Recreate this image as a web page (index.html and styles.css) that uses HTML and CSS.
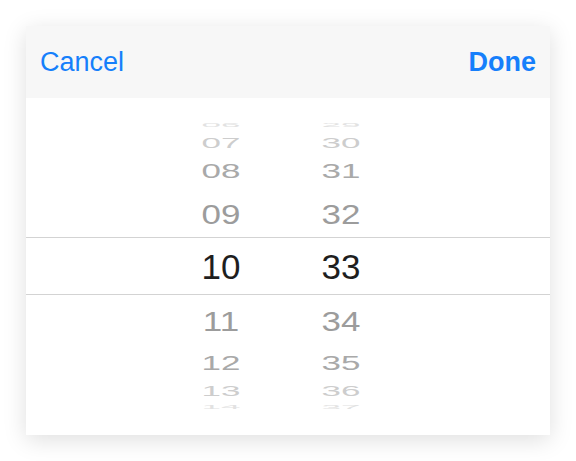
FILE: index.html
```html
<!DOCTYPE html>
<html>
<head>
<meta charset="utf-8">
<link rel="stylesheet" href="styles.css">
</head>
<body>
<div class="sheet">
  <div class="toolbar">
    <span class="btn">Cancel</span>
    <span class="btn done">Done</span>
  </div>
  <div class="picker">
    <div class="band"></div>
    <div class="wheels">
      <div class="wheel">
        <div class="row r4"><span>06</span></div>
        <div class="row r3"><span>07</span></div>
        <div class="row r2"><span>08</span></div>
        <div class="row r1"><span>09</span></div>
        <div class="row r0"><span>10</span></div>
        <div class="row r1"><span>11</span></div>
        <div class="row r2"><span>12</span></div>
        <div class="row r3"><span>13</span></div>
        <div class="row r4"><span>14</span></div>
      </div>
      <div class="wheel">
        <div class="row r4"><span>29</span></div>
        <div class="row r3"><span>30</span></div>
        <div class="row r2"><span>31</span></div>
        <div class="row r1"><span>32</span></div>
        <div class="row r0"><span>33</span></div>
        <div class="row r1"><span>34</span></div>
        <div class="row r2"><span>35</span></div>
        <div class="row r3"><span>36</span></div>
        <div class="row r4"><span>37</span></div>
      </div>
    </div>
  </div>
</div>
</body>
</html>
```
FILE: styles.css
```css
html, body {
  margin: 0;
  padding: 0;
  background: #ffffff;
}
body {
  padding: 26px;
  font-family: "Liberation Sans", Arial, sans-serif;
}
.sheet {
  width: 524px;
  height: 409px;
  background: #ffffff;
  box-shadow: 0 5px 22px rgba(0, 0, 0, 0.13);
  display: flex;
  flex-direction: column;
}
.toolbar {
  height: 72px;
  flex: none;
  background: #f7f7f7;
  display: flex;
  align-items: center;
  justify-content: space-between;
  padding: 0 14px;
}
.btn {
  font-size: 27px;
  color: #167ffb;
  line-height: 1;
}
.done {
  font-weight: bold;
}
.picker {
  flex: 1;
  position: relative;
  overflow: hidden;
}
.band {
  position: absolute;
  left: 0;
  right: 0;
  top: 139px;
  height: 56px;
  border-top: 1px solid #d3d3d3;
  border-bottom: 1px solid #d3d3d3;
}
.wheels {
  height: 100%;
  display: flex;
  justify-content: center;
  padding-right: 14px;
}
.wheel {
  width: 120px;
  display: flex;
  flex-direction: column;
  justify-content: center;
}
.row {
  display: flex;
  align-items: center;
  justify-content: center;
  font-size: 35px;
  line-height: 1;
}
.row span {
  display: block;
}
.r0 {
  height: 56px;
  color: #1e1e1e;
}
.r1 {
  height: 51px;
  color: #9c9c9c;
}
.r1 span { transform: scaleY(0.8); }
.r2 {
  height: 34px;
  color: #a9a9a9;
}
.r2 span { transform: scaleY(0.6); }
.r3 {
  height: 22px;
  color: #cdcdcd;
}
.r3 span { transform: scaleY(0.4); }
.r4 {
  height: 12px;
  color: #e2e2e2;
}
.r4 span { transform: scaleY(0.15); }
```
